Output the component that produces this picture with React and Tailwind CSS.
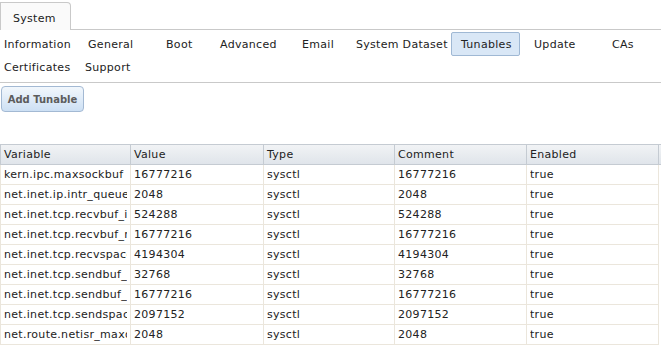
import React from "react";

const tabs1 = [
  ["Information", "w-[84px]"],
  ["General", "w-[78px]"],
  ["Boot", "w-[54px]"],
  ["Advanced", "w-[82px]"],
  ["Email", "w-[54px]"],
  ["System Dataset", "w-[95px]"],
];

const rows = [
  ["kern.ipc.maxsockbuf", "16777216"],
  ["net.inet.ip.intr_queue_maxlen", "2048"],
  ["net.inet.tcp.recvbuf_inc", "524288"],
  ["net.inet.tcp.recvbuf_max", "16777216"],
  ["net.inet.tcp.recvspace", "4194304"],
  ["net.inet.tcp.sendbuf_inc", "32768"],
  ["net.inet.tcp.sendbuf_max", "16777216"],
  ["net.inet.tcp.sendspace", "2097152"],
  ["net.route.netisr_maxqlen", "2048"],
];

export default function App() {
  return (
    <div
      className="w-[661px] h-[346px] overflow-hidden bg-white text-[11px] text-[#222] tracking-[0.3px]"
      style={{ fontFamily: '"DejaVu Sans", Verdana, sans-serif' }}
    >
      {/* top tab */}
      <div className="flex h-[30px] pt-[2px]">
        <div className="w-[71px] h-[28px] border border-b-0 border-[#c9c9c9] rounded-tr-[4px] bg-[#fafafa] pl-[12px] pt-[9px] leading-[13px]">
          System
        </div>
        <div className="flex-1 border-b border-[#c9c9c9]" />
      </div>
      {/* sub tabs */}
      <div className="h-[53px] border-b border-[#c9c9c9] pt-[2px]">
        <div className="flex h-[24px] items-center">
          <div className="flex pl-[4px]">
            {tabs1.map(([t, w]) => (
              <div key={t} className={`${w} leading-[13px]`}>
                {t}
              </div>
            ))}
          </div>
          <div className="h-[24px] w-[69px] flex items-center pl-[9px] border border-[#9fb8d4] rounded-[2px] bg-[#d9e7f6] leading-[13px]">
            Tunables
          </div>
          <div className="w-[92px] pl-[14px] leading-[13px]">Update</div>
          <div className="leading-[13px]">CAs</div>
        </div>
        <div className="flex h-[23px] items-center pl-[4px]">
          <div className="w-[81px] leading-[13px]">Certificates</div>
          <div className="leading-[13px]">Support</div>
        </div>
      </div>
      {/* add button */}
      <div className="pt-[3px] pl-[1px] h-[61px]">
        <button className="h-[26px] w-[83px] rounded-[4px] border border-[#a3b9d3] bg-gradient-to-b from-[#f2f7fc] to-[#cde0f4] text-[#5c5c5c] font-bold text-[10px] tracking-normal leading-[13px]">
          Add Tunable
        </button>
      </div>
      {/* table */}
      <table className="table-fixed border-collapse w-[661px]">
        <colgroup>
          <col className="w-[130px]" />
          <col className="w-[133px]" />
          <col className="w-[131px]" />
          <col className="w-[132px]" />
          <col className="w-[132px]" />
          <col className="w-[3px]" />
        </colgroup>
        <thead>
          <tr className="h-[20px] bg-gradient-to-b from-[#f1f3f5] to-[#dfe4ea]">
            {["Variable", "Value", "Type", "Comment", "Enabled", ""].map((h, i) => (
              <th
                key={i}
                className="border border-[#c5cbd2] font-normal text-left px-[3px] py-0 leading-[13px] whitespace-nowrap overflow-hidden"
              >
                {h}
              </th>
            ))}
          </tr>
        </thead>
        <tbody>
          {rows.map(([v, n]) => (
            <tr key={v} className="h-[20px]">
              {[v, n, "sysctl", n, "true"].map((c, i) => (
                <td
                  key={i}
                  className="border border-[#ebe6dc] px-[3px] py-0 leading-[13px]"
                >
                  <div className="overflow-hidden whitespace-nowrap">{c}</div>
                </td>
              ))}
              <td className="border-0" />
            </tr>
          ))}
        </tbody>
      </table>
    </div>
  );
}
